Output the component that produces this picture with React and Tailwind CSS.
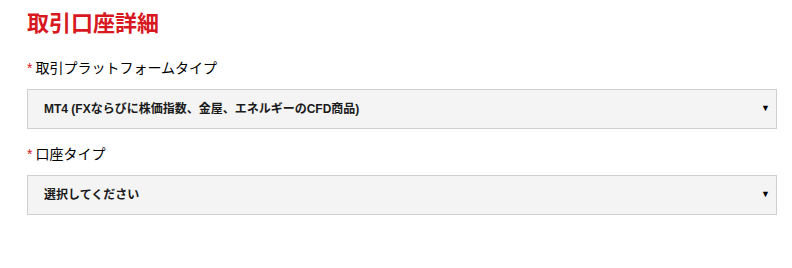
import React from "react";

const font = { fontFamily: '"Liberation Sans", Arial, "Noto Sans CJK JP", sans-serif' };

const SelectField = ({ label, value }) => (
  <div>
    <label className="flex items-center text-[14px] leading-[20px] text-black">
      <span className="text-[#d7191f] mr-[3px] text-[14px]">*</span>
      {label}
    </label>
    <div className="relative mt-[11px] h-[40px] border border-[#cfcfcf] bg-[#f4f4f4] flex items-center pl-[16px] pr-[30px]">
      <span className="text-[12px] font-bold text-[#1a1a1a]">{value}</span>
      <span className="absolute right-[6px] top-1/2 -translate-y-1/2 text-[9px] text-black">▼</span>
    </div>
  </div>
);

export default function App() {
  return (
    <div className="w-[792px] h-[268px] bg-white pl-[27px] pr-[15px] pt-[10px]" style={font}>
      <h2 className="text-[22px] leading-[28px] font-bold text-[#d7191f]">取引口座詳細</h2>
      <div className="mt-[20px] flex flex-col gap-[15px]">
        <SelectField
          label="取引プラットフォームタイプ"
          value="MT4 (FXならびに株価指数、金屋、エネルギーのCFD商品)"
        />
        <SelectField label="口座タイプ" value="選択してください" />
      </div>
    </div>
  );
}
